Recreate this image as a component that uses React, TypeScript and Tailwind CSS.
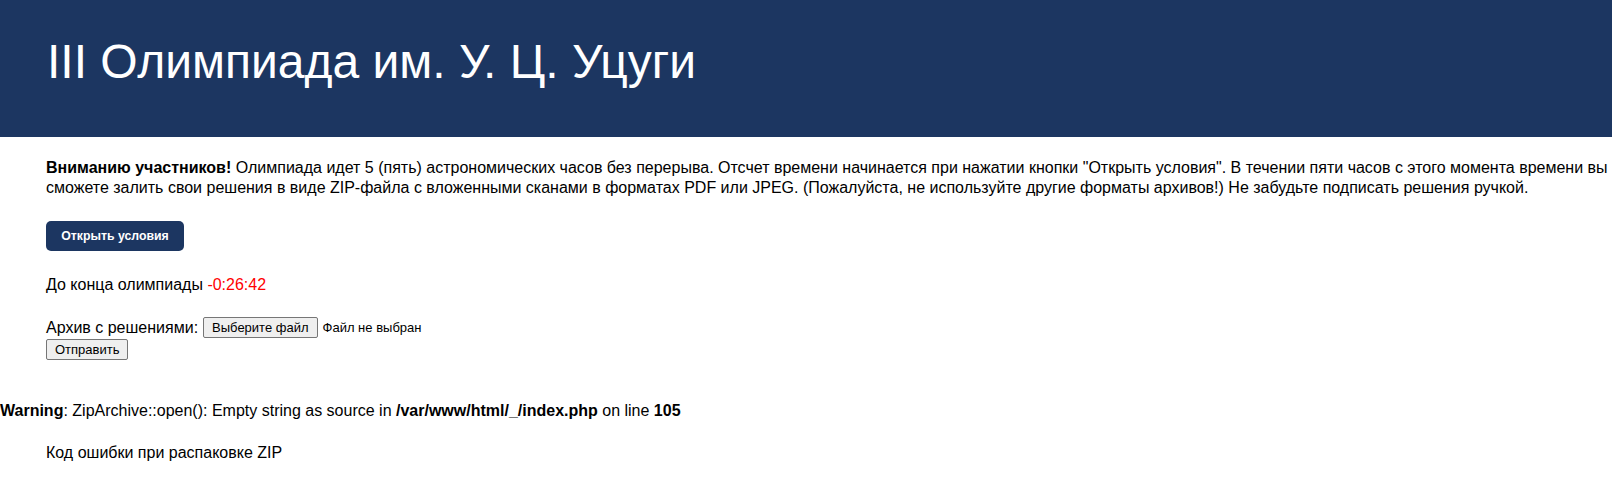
import React from 'react';

export default function App() {
  return (
    <div className="min-h-[499px] bg-white text-black font-['Liberation_Sans',Arial,sans-serif] text-[16px] leading-[20px]">
      {/* Header */}
      <header className="h-[137px] bg-[#1c3661] pl-[47px] pt-[34px]">
        <h1 className="text-[48px] leading-[55px] font-normal text-white">III Олимпиада им. У. Ц. Уцуги</h1>
      </header>

      <main className="pl-[46px] pt-[21px]">
        <p className="pr-[4px]">
          <b>Вниманию участников!</b> Олимпиада идет 5 (пять) астрономических часов без перерыва. Отсчет времени
          начинается при нажатии кнопки "Открыть условия". В течении пяти часов с этого момента времени вы сможете
          залить свои решения в виде ZIP-файла с вложенными сканами в форматах PDF или JPEG. (Пожалуйста, не
          используйте другие форматы архивов!) Не забудьте подписать решения ручкой.
        </p>

        <button className="mt-[23px] h-[30px] w-[138px] rounded-[5px] bg-[#1c3661] text-[12.3px] font-bold text-white">
          Открыть условия
        </button>

        <div className="mt-[24px]">
          До конца олимпиады <span className="text-[#ff0000]">-0:26:42</span>
        </div>

        <form className="mt-[22px]">
          <div className="flex items-center">
            <span>Архив с решениями:</span>
            <span className="ml-[5px] flex h-[21px] items-center rounded-[2px] border border-[#767676] bg-[#efefef] px-[8px] text-[13px]">
              Выберите файл
            </span>
            <span className="ml-[5px] text-[13px]">Файл не выбран</span>
          </div>
          <button
            type="button"
            className="mt-[1px] flex h-[21px] items-center rounded-[2px] border border-[#767676] bg-[#efefef] px-[8px] text-[13px]"
          >
            Отправить
          </button>
        </form>
      </main>

      {/* PHP warning output */}
      <div className="mt-[41px]">
        <b>Warning</b>: ZipArchive::open(): Empty string as source in <b>/var/www/html/_/index.php</b> on line{' '}
        <b>105</b>
      </div>

      <div className="mt-[22px] pl-[46px]">Код ошибки при распаковке ZIP</div>
    </div>
  );
}
